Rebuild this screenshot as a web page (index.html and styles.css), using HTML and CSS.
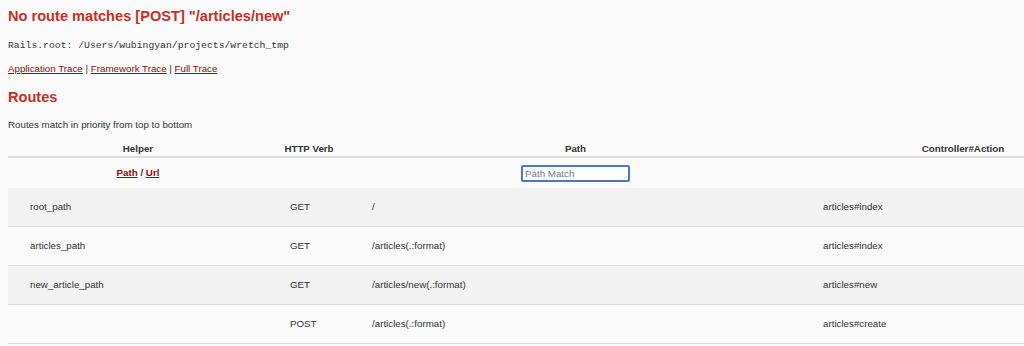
FILE: index.html
```html
<!DOCTYPE html>
<html lang="en">
<head>
    <meta charset="UTF-8">
    <meta name="viewport" content="width=device-width, initial-scale=1.0">
    <title>Routing Error</title>
    <link rel="stylesheet" href="styles.css">
</head>
<body>
    <header class="error-head">
        <h1>No route matches [POST] "/articles/new"</h1>
    </header>

    <div class="details">
        <p class="rails-root"><code>Rails.root: /Users/wubingyan/projects/wretch_tmp</code></p>

        <p class="trace-links">
            <a href="#">Application Trace</a> | <a href="#">Framework Trace</a> | <a href="#">Full Trace</a>
        </p>

        <h2>Routes</h2>
        <p class="routes-note">Routes match in priority from top to bottom</p>

        <div class="route-wrap">
            <table id="route_table">
                <colgroup>
                    <col class="col-helper">
                    <col class="col-verb">
                    <col class="col-path">
                    <col class="col-action">
                </colgroup>
                <thead>
                    <tr class="top">
                        <th>Helper</th>
                        <th>HTTP Verb</th>
                        <th>Path</th>
                        <th>Controller#Action</th>
                    </tr>
                    <tr class="bottom">
                        <th><a href="#">Path</a> / <a href="#">Url</a></th>
                        <th></th>
                        <th><input type="search" class="path-match" placeholder="Path Match"></th>
                        <th></th>
                    </tr>
                </thead>
                <tbody>
                    <tr>
                        <td>root_path</td>
                        <td>GET</td>
                        <td>/</td>
                        <td>articles#index</td>
                    </tr>
                    <tr>
                        <td>articles_path</td>
                        <td>GET</td>
                        <td>/articles(.:format)</td>
                        <td>articles#index</td>
                    </tr>
                    <tr>
                        <td>new_article_path</td>
                        <td>GET</td>
                        <td>/articles/new(.:format)</td>
                        <td>articles#new</td>
                    </tr>
                    <tr>
                        <td></td>
                        <td>POST</td>
                        <td>/articles(.:format)</td>
                        <td>articles#create</td>
                    </tr>
                </tbody>
            </table>
        </div>
    </div>
</body>
</html>
```

FILE: styles.css
```css
body {
    margin: 0;
    padding: 0 8px;
    background-color: #fafafa;
    color: #333;
    font-family: "Liberation Sans", Arial, Helvetica, sans-serif;
    font-size: 9.75px;
    line-height: 14px;
    overflow: hidden;
}
a {
    color: #980905;
}
h1 {
    margin: 0;
    padding-top: 8px;
    color: #c52f24;
    font-size: 14.6px;
    line-height: 16px;
}
h2 {
    margin: 13px 0 0;
    color: #c52f24;
    font-size: 14.6px;
    line-height: 16px;
}
.rails-root {
    margin: 14px 0 0;
}
.rails-root code {
    font-family: "Liberation Mono", "Courier New", monospace;
    font-size: 9.75px;
}
.trace-links {
    margin: 9px 0 0;
}
.routes-note {
    margin: 13px 0 0;
}
.route-wrap {
    margin: 6px -8px 0 0;
    overflow: hidden;
}
#route_table {
    width: 1117px;
    table-layout: fixed;
    border-collapse: collapse;
}
.col-helper { width: 260px; }
.col-verb { width: 82px; }
.col-path { width: 451px; }
.col-action { width: 324px; }
#route_table thead tr.top {
    border-bottom: 2px solid #ddd;
}
#route_table thead tr.top th {
    padding: 4px 0 0;
    line-height: 14px;
    font-weight: bold;
}
#route_table thead tr.bottom th {
    height: 30px;
    padding: 0;
    vertical-align: middle;
}
#route_table tbody tr {
    border-bottom: 1px solid #ddd;
}
#route_table tbody tr:nth-child(odd) {
    background: #f2f2f2;
}
#route_table td {
    height: 38px;
    padding: 0 22px;
    vertical-align: middle;
    white-space: nowrap;
}
.path-match {
    box-sizing: border-box;
    width: 109px;
    height: 17px;
    margin: 0;
    padding: 0 2px;
    border: 2px solid #4a78d0;
    border-radius: 2px;
    background: #fff;
    font-family: "Liberation Sans", Arial, sans-serif;
    font-size: 9.75px;
    outline: none;
    -webkit-appearance: none;
    appearance: none;
}
.path-match::placeholder {
    color: #777;
}
```
